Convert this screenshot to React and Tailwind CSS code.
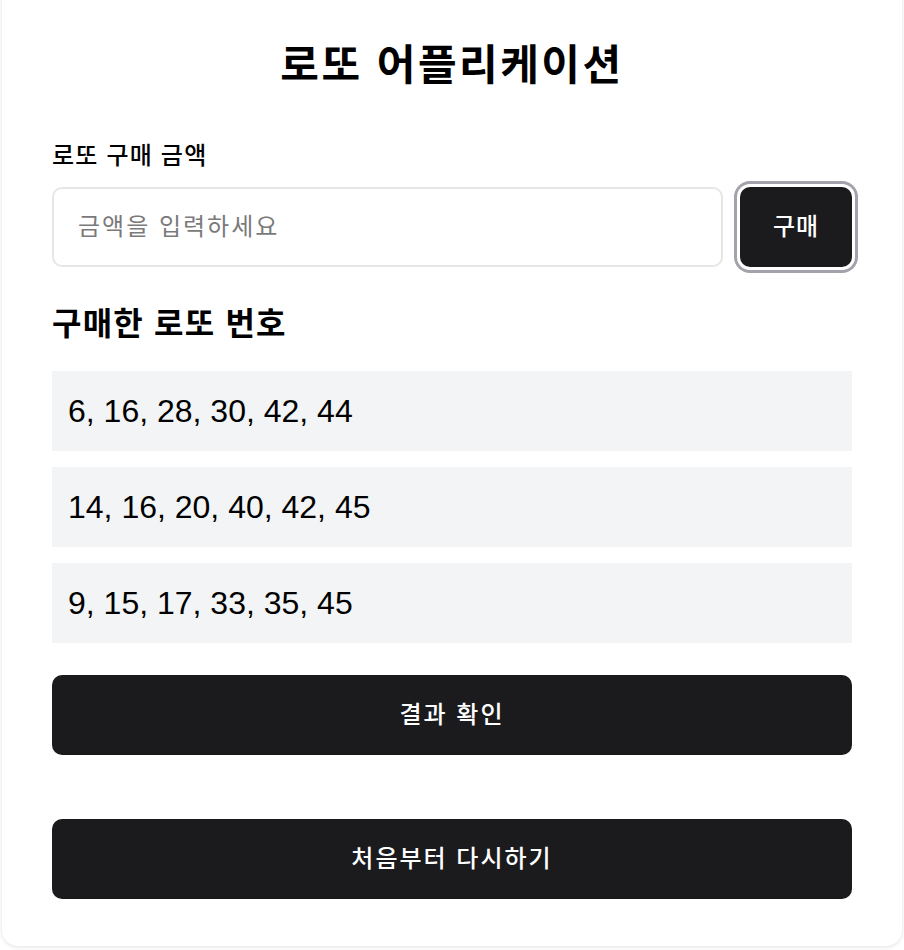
import React, { useState } from 'react';

const FONT = { fontFamily: '"Liberation Sans", "Noto Sans CJK KR", sans-serif' };

export default function App() {
    const [amount, setAmount] = useState('');
    const [tickets] = useState([
        [6, 16, 28, 30, 42, 44],
        [14, 16, 20, 40, 42, 45],
        [9, 15, 17, 33, 35, 45],
    ]);

    return (
        <div className="min-h-screen bg-white px-[2px] overflow-hidden" style={FONT}>
            <div className="-mt-4 bg-white rounded-2xl shadow-[0_1px_4px_rgba(0,0,0,0.12)] px-[50px] pt-[58px] pb-[47px] text-black">
                <h1 className="text-center text-[42px] leading-[48px] font-bold tracking-[2.5px]">로또 어플리케이션</h1>

                <label className="block mt-[50px] mb-[15px] text-[24px] leading-[32px] font-medium tracking-[1.2px]">로또 구매 금액</label>
                <div className="flex gap-[17px]">
                    <input
                        type="number"
                        value={amount}
                        onChange={(e) => setAmount(e.target.value)}
                        placeholder="금액을 입력하세요"
                        className="flex-1 h-20 rounded-[10px] border-2 border-[#e6e6e6] px-[24px] text-[24px] tracking-[2px] placeholder:text-[#7a7a7a] outline-none"
                    />
                    <button className="w-[112px] h-20 rounded-[10px] bg-[#1b1b1d] text-white text-[24px] font-medium tracking-[1px] ring-[3px] ring-[#a3a3ab] ring-offset-[3px] ring-offset-white">
                        구매
                    </button>
                </div>

                <h2 className="mt-[39px] text-[32px] leading-[36px] font-bold tracking-[1.2px]">구매한 로또 번호</h2>
                <div className="mt-[29px] flex flex-col gap-4">
                    {tickets.map((nums, i) => (
                        <div key={i} className="h-20 bg-[#f3f4f6] flex items-center px-4 text-[32px]">
                            {nums.join(', ')}
                        </div>
                    ))}
                </div>

                <button className="mt-8 w-full h-20 rounded-[10px] bg-[#1b1b1d] text-white text-[24px] font-medium tracking-[2px]">
                    결과 확인
                </button>
                <button className="mt-16 w-full h-20 rounded-[10px] bg-[#1b1b1d] text-white text-[24px] font-medium tracking-[2px]">
                    처음부터 다시하기
                </button>
            </div>
        </div>
    );
}
